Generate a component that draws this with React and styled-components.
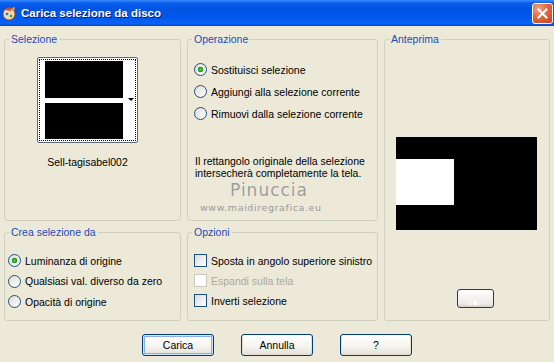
import React from 'react'
import styled, { createGlobalStyle } from 'styled-components'

const GlobalStyle = createGlobalStyle`
body {
  margin: 0;
  background: #ECE9D8;
  font-family: "Liberation Sans", Arial, sans-serif;
  font-size: 10.5px;
  color: #000;
}
`

const Window = styled.div`
width: 554px;
height: 362px;
background: #ECE9D8;
overflow: hidden;
position: relative;
`

const TitleBar = styled.div`
height: 26px;
display: flex;
align-items: center;
padding: 0 1px 0 2px;
background: linear-gradient(180deg, #3A8CFF 0%, #0A5EEC 12%, #0054E3 35%, #0058EE 70%, #0A62F5 90%, #0043CF 100%);
`

const TitleText = styled.span`
flex: 1;
margin-left: 4px;
color: #fff;
font-weight: bold;
font-size: 11.5px;
text-shadow: 1px 1px 0 #0A1883;
`

const CloseButton = styled.div`
width: 21px;
height: 21px;
box-sizing: border-box;
border: 1px solid #fff;
border-radius: 3px;
background: radial-gradient(circle at 30% 25%, #F0A487 0%, #E5663F 45%, #C8401A 100%);
display: flex;
align-items: center;
justify-content: center;
`

const Body = styled.div`
padding: 7px 4px 0 4px;
display: grid;
grid-template-columns: 177px 191px 166px;
grid-template-rows: 188px 95px;
column-gap: 6px;
row-gap: 5px;
`

const Group = styled.fieldset`
margin: 0;
padding: 0;
min-width: 0;
border: 1px solid #D0D0BF;
border-radius: 3px;
box-sizing: border-box;
grid-row: ${p => p.$span ? '1 / span 2' : 'auto'};
grid-column: ${p => p.$col || 'auto'};
position: relative;
`

const Caption = styled.legend`
margin-left: 4px;
padding: 0 2px;
color: #1D4BB8;
font-size: 10.5px;
line-height: 13px;
`

const SelectionBox = styled.div`
display: flex;
flex-direction: column;
align-items: center;
padding: 11px 14px 0 4px;
`

const Thumb = styled.div`
width: 101px;
height: 86px;
box-sizing: border-box;
border: 1px solid #5A6A7A;
border-radius: 2px;
background: #fff;
padding: 1px;
`

const ThumbFocus = styled.div`
height: 100%;
box-sizing: border-box;
border: 1px dotted #000;
display: flex;
position: relative;
`

const ThumbImage = styled.div`
width: 78px;
margin: 1px 0 1px 5px;
display: flex;
flex-direction: column;
gap: 5px;
`

const ThumbBlock = styled.div`
flex: 1;
background: #000;
`

const DropArrow = styled.div`
position: absolute;
right: 1px;
top: 38px;
width: 0;
height: 0;
border-left: 3px solid transparent;
border-right: 3px solid transparent;
border-top: 3px solid #000;
`

const FileName = styled.div`
margin-top: 13px;
line-height: 13px;
`

const List = styled.div`
display: flex;
flex-direction: column;
gap: ${p => p.$gap}px;
padding: ${p => p.$pad};
`

const Option = styled.label`
display: flex;
align-items: center;
gap: 4px;
height: 13px;
color: ${p => p.$disabled ? '#ACA899' : '#000'};
white-space: nowrap;
`

const Radio = styled.span`
width: 13px;
height: 13px;
box-sizing: border-box;
border: 1px solid #1C5180;
border-radius: 50%;
background: ${p => p.$on
  ? 'radial-gradient(circle, #5CD15C 0, #21A121 2px, #1E8F1E 2.6px, transparent 3px), linear-gradient(135deg, #DCDCD7, #FFFFFF)'
  : 'linear-gradient(135deg, #DCDCD7, #FFFFFF)'};
flex: none;
`

const Check = styled.span`
width: 13px;
height: 13px;
box-sizing: border-box;
border: 1px solid ${p => p.$disabled ? '#CAC8BB' : '#1C5180'};
background: ${p => p.$disabled ? '#fff' : 'linear-gradient(135deg, #DCDCD7, #FFFFFF)'};
flex: none;
`

const Note = styled.div`
margin: 35px 0 0 7px;
line-height: 12px;
`

const Watermark = styled.div`
position: absolute;
left: 12px;
top: 134px;
text-align: center;
color: #9A9A9A;
font-family: "DejaVu Sans", sans-serif;
pointer-events: none;
`

const WaterName = styled.div`
font-size: 17px;
letter-spacing: 1px;
line-height: 20px;
padding-left: 30px;
text-align: left;
text-shadow: 0 0 1px #fff;
`

const WaterSite = styled.div`
font-size: 9.5px;
letter-spacing: 0.6px;
line-height: 12px;
margin-top: 2px;
`

const PreviewArea = styled.div`
display: flex;
flex-direction: column;
align-items: center;
padding-top: 91px;
`

const Preview = styled.div`
width: 141px;
height: 93px;
background: #000;
margin-left: -1px;
`

const PreviewWhite = styled.div`
width: 58px;
height: 46px;
margin-top: 22px;
background: #fff;
`

const SmallButton = styled.div`
margin: 59px 0 0 16px;
width: 37px;
height: 19px;
box-sizing: border-box;
border: 1px solid #1D3F5E;
border-radius: 3px;
background: linear-gradient(180deg, #FFFFFF, #ECEBE6 80%, #D6D0C5);
display: flex;
align-items: flex-end;
justify-content: center;
padding-bottom: 2px;
gap: 1px;
`

const Pixel = styled.span`
width: 4px;
height: 4px;
background: ${p => p.$c};
`

const ButtonRow = styled.div`
display: flex;
justify-content: center;
gap: 27px;
margin-top: 13px;
`

const Button = styled.button`
width: 72px;
height: 22px;
box-sizing: border-box;
border: 1px solid #003C74;
border-radius: 3px;
background: linear-gradient(180deg, #FFFFFF 0%, #F4F3EE 60%, #E3E0D6 100%);
font-family: "Liberation Sans", Arial, sans-serif;
font-size: 10.5px;
color: #000;
padding: 0;
box-shadow: ${p => p.$default ? 'inset 0 0 0 1px #CEE7FF, inset 0 0 0 2px #89ADE4' : 'inset 0 -1px 0 1px #E3E0D6'};
`

function TitleIcon() {
  return (
    <svg width="15" height="15" viewBox="0 0 15 15">
      <circle cx="7" cy="8" r="6" fill="#F3D9A4" stroke="#A0522D" strokeWidth="1" />
      <path d="M3 4 L7 1 L10 5 Z" fill="#E0402A" />
      <circle cx="5" cy="8" r="1.3" fill="#2A6AE0" />
      <circle cx="9" cy="10" r="1.3" fill="#2FA040" />
      <path d="M10 2 L13 1 L12 5 Z" fill="#F2B233" />
    </svg>
  )
}

function CloseIcon() {
  return (
    <svg width="11" height="11" viewBox="0 0 11 11">
      <path d="M1.5 1.5 L9.5 9.5 M9.5 1.5 L1.5 9.5" stroke="#fff" strokeWidth="2" strokeLinecap="square" />
    </svg>
  )
}

function App() {
  return (
    <Window>
      <GlobalStyle />
      <TitleBar>
        <TitleIcon />
        <TitleText>Carica selezione da disco</TitleText>
        <CloseButton><CloseIcon /></CloseButton>
      </TitleBar>
      <Body>
        <Group>
          <Caption>Selezione</Caption>
          <SelectionBox>
            <Thumb>
              <ThumbFocus>
                <ThumbImage>
                  <ThumbBlock />
                  <ThumbBlock />
                </ThumbImage>
                <DropArrow />
              </ThumbFocus>
            </Thumb>
            <FileName>Sell-tagisabel002</FileName>
          </SelectionBox>
        </Group>

        <Group>
          <Caption>Operazione</Caption>
          <List $gap={9} $pad="17px 0 0 6px">
            <Option><Radio $on />Sostituisci selezione</Option>
            <Option><Radio />Aggiungi alla selezione corrente</Option>
            <Option><Radio />Rimuovi dalla selezione corrente</Option>
          </List>
          <Note>
            Il rettangolo originale della selezione<br />
            intersecherà completamente la tela.
          </Note>
          <Watermark>
            <WaterName>Pinuccia</WaterName>
            <WaterSite>www.maidiregrafica.eu</WaterSite>
          </Watermark>
        </Group>

        <Group $span $col="3">
          <Caption>Anteprima</Caption>
          <PreviewArea>
            <Preview>
              <PreviewWhite />
            </Preview>
            <SmallButton>
              <Pixel $c="#F4F4F4" />
              <Pixel $c="#FFFFFF" />
              <Pixel $c="#F0F0F0" />
            </SmallButton>
          </PreviewArea>
        </Group>

        <Group>
          <Caption>Crea selezione da</Caption>
          <List $gap={7.5} $pad="15px 0 0 3px">
            <Option><Radio $on />Luminanza di origine</Option>
            <Option><Radio />Qualsiasi val. diverso da zero</Option>
            <Option><Radio />Opacità di origine</Option>
          </List>
        </Group>

        <Group>
          <Caption>Opzioni</Caption>
          <List $gap={7} $pad="15px 0 0 6px">
            <Option><Check />Sposta in angolo superiore sinistro</Option>
            <Option $disabled><Check $disabled />Espandi sulla tela</Option>
            <Option><Check />Inverti selezione</Option>
          </List>
        </Group>
      </Body>
      <ButtonRow>
        <Button $default>Carica</Button>
        <Button>Annulla</Button>
        <Button>?</Button>
      </ButtonRow>
    </Window>
  )
}

export default App
